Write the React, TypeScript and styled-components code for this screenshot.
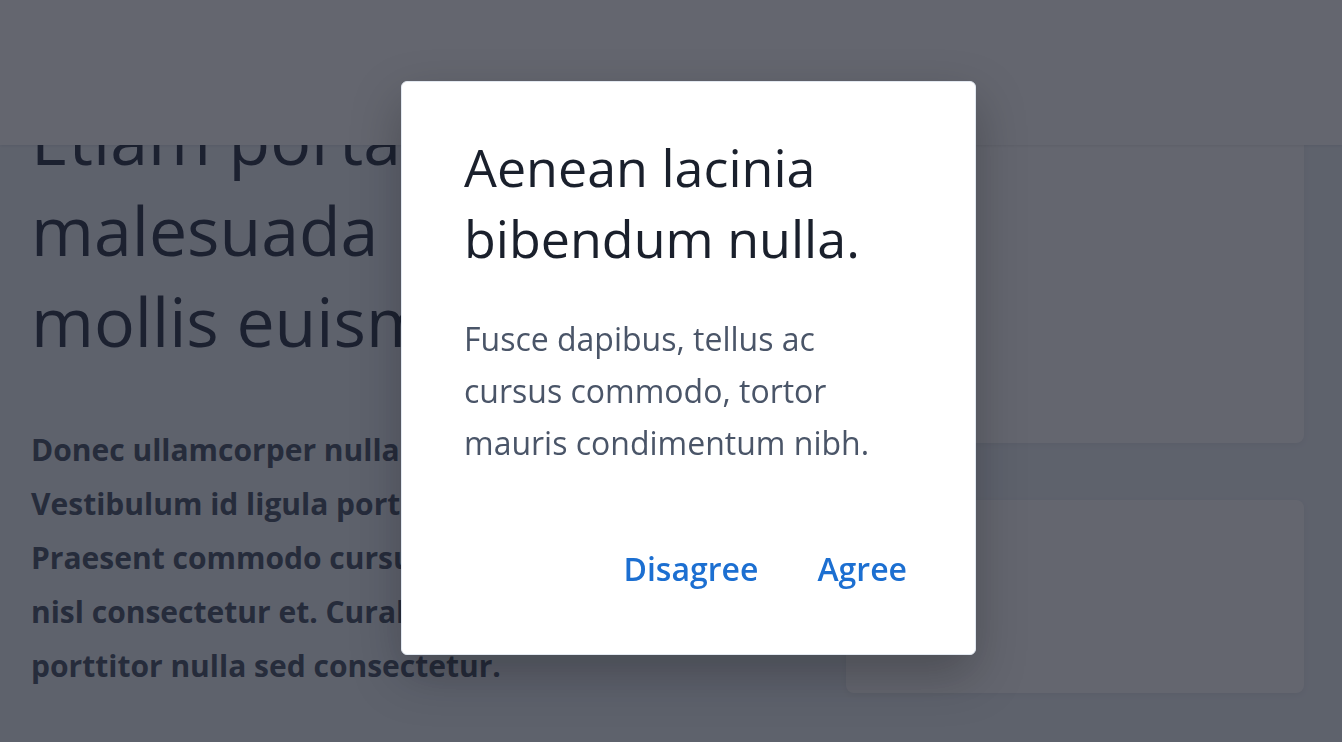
import styled, { createGlobalStyle } from 'styled-components';

const GlobalStyle = createGlobalStyle`
  *, *::before, *::after {
    box-sizing: border-box;
  }

  body {
    margin: 0;
    background: #edf2f7;
    font-family: 'Open Sans', 'Noto Sans', sans-serif;
    color: #2d3748;
    overflow: hidden;
  }
`;

const Header = styled.header`
  position: fixed;
  top: 0;
  left: 0;
  right: 0;
  height: 145px;
  background: #ffffff;
  box-shadow: 0 1px 3px rgba(0, 0, 0, 0.1);
  z-index: 10;
`;

const Main = styled.main`
  display: grid;
  grid-template-columns: 1fr 458px;
  column-gap: 56px;
  padding: 93px 38px 0 31px;
  height: 742px;
`;

const Article = styled.article`
  min-width: 0;
`;

const Title = styled.h1`
  margin: 0;
  font-size: 68px;
  line-height: 91px;
  font-weight: 400;
  color: #2d3748;
`;

const Lead = styled.p`
  margin: 57px 0 0;
  font-size: 30px;
  line-height: 54px;
  font-weight: 700;
  color: #4a5568;
`;

const Aside = styled.aside`
  display: flex;
  flex-direction: column;
  gap: 57px;
  margin-top: -1px;
`;

const Card = styled.div<{ $height: number }>`
  height: ${(p) => p.$height}px;
  background: #ffffff;
  border-radius: 8px;
  box-shadow: 0 2px 6px rgba(0, 0, 0, 0.06);
`;

const Overlay = styled.div`
  position: fixed;
  inset: 0;
  z-index: 20;
  display: flex;
  justify-content: center;
  align-items: flex-start;
  padding: 81px 0 0 35px;
  background: rgba(20, 23, 37, 0.66);
`;

const Dialog = styled.div`
  width: 575px;
  padding: 49px 62px 53px;
  background: #ffffff;
  border: 1px solid #e2e8f0;
  border-radius: 6px;
  box-shadow: 0 20px 50px rgba(0, 0, 0, 0.25);
`;

const DialogTitle = styled.h2`
  margin: 0;
  font-size: 52px;
  line-height: 71px;
  font-weight: 400;
  color: #1a202c;
`;

const DialogText = styled.p`
  margin: 40px 0 0;
  font-size: 32px;
  line-height: 52px;
  color: #4a5568;
`;

const Actions = styled.div`
  display: flex;
  justify-content: flex-end;
  gap: 47px;
  margin-top: 68px;
`;

const ActionButton = styled.button`
  padding: 8px 6px;
  border: none;
  background: none;
  font-family: inherit;
  font-size: 32px;
  line-height: 48px;
  font-weight: 600;
  color: #1c6fd1;
  cursor: pointer;
`;

export default function App() {
  return (
    <>
      <GlobalStyle />
      <Header />
      <Main>
        <Article>
          <Title>Etiam porta sem malesuada magna mollis euismod.</Title>
          <Lead>
            Donec ullamcorper nulla non metus auctor.
            <br />
            Vestibulum id ligula porta felis euismod.
            <br />
            Praesent commodo cursus magna, vel
            <br />
            nisl consectetur et. Curabitur blandit
            <br />
            porttitor nulla sed consectetur.
          </Lead>
        </Article>
        <Aside>
          <Card $height={351} />
          <Card $height={193} />
        </Aside>
      </Main>
      <Overlay>
        <Dialog role="dialog" aria-modal="true">
          <DialogTitle>Aenean lacinia bibendum nulla.</DialogTitle>
          <DialogText>Fusce dapibus, tellus ac cursus commodo, tortor mauris condimentum nibh.</DialogText>
          <Actions>
            <ActionButton>Disagree</ActionButton>
            <ActionButton>Agree</ActionButton>
          </Actions>
        </Dialog>
      </Overlay>
    </>
  );
}
